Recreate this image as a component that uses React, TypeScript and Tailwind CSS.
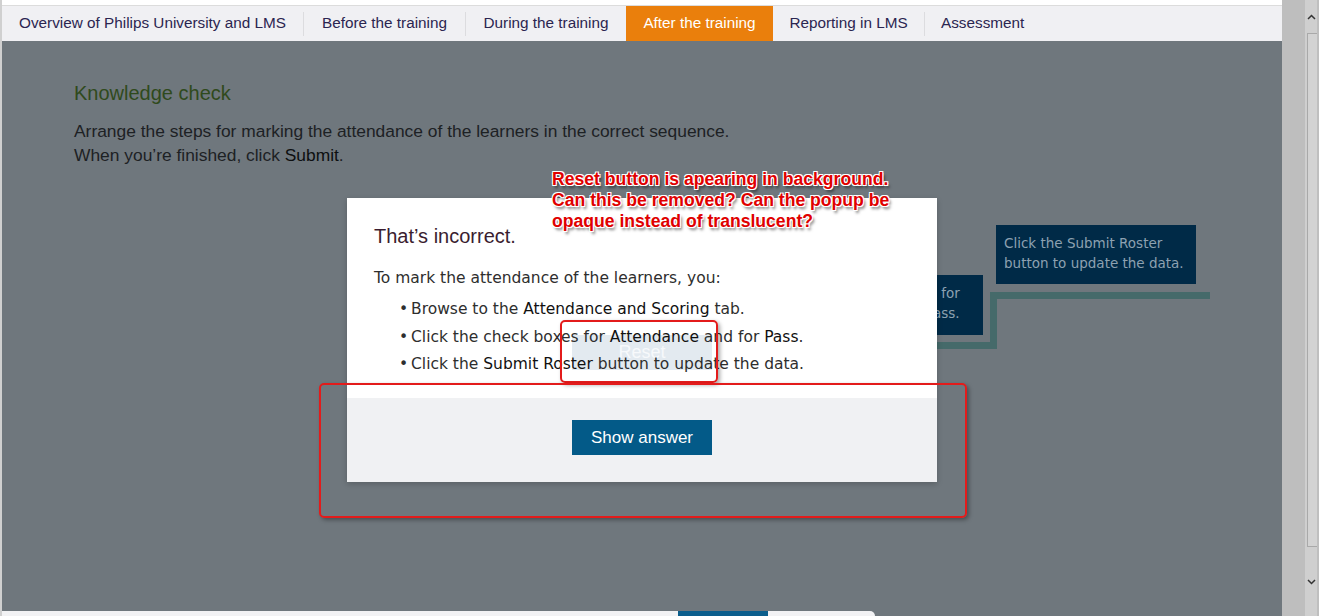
import React from "react";

const navItems = [
  { label: "Overview of Philips University and LMS", w: "w-[301px]" },
  { label: "Before the training", w: "w-[161px]" },
  { label: "During the training", w: "w-[160px]" },
  { label: "After the training", w: "w-[147px]", active: true },
  { label: "Reporting in LMS", w: "w-[151px]" },
];

const dv = { fontFamily: '"DejaVu Sans", Verdana, sans-serif' };

export default function App() {
  return (
    <div
      className="relative w-[1319px] h-[616px] flex overflow-hidden bg-[#bfbfbf]"
      style={{ fontFamily: '"Liberation Sans", Arial, sans-serif' }}
    >
      {/* main frame */}
      <div className="w-[1282px] h-full flex flex-col border-l-2 border-[#d0d0d0]">
        <div className="h-[5px] bg-white" />
        <div className="h-[1px] bg-[#dcdcdc]" />
        <nav className="h-[35px] flex bg-[#f0f0f3]">
          {navItems.map((it, i) => (
            <div key={i} className="flex items-center">
              {i > 0 && !it.active && !navItems[i - 1].active && (
                <div className="w-px h-[24px] bg-[#dcdcdf]" />
              )}
              <div
                className={`${it.w} h-[35px] flex items-center justify-center text-[15.3px] ${
                  it.active ? "bg-[#ea7f0c] text-white" : "text-[#2b2550]"
                }`}
              >
                {it.label}
              </div>
            </div>
          ))}
          <div className="flex items-center">
            <div className="w-px h-[24px] bg-[#dcdcdf]" />
            <div className="pl-[16px] text-[15.3px] text-[#2b2550]">Assessment</div>
          </div>
        </nav>

        {/* content */}
        <div className="relative flex-1 flex flex-col bg-[#6f777d]">
          <div className="flex-1 pl-[72px] pt-[40px]">
            <h2 className="text-[20px] leading-[24px] text-[#2f4a1c]">Knowledge check</h2>
            <p className="mt-[14px] text-[17.4px] leading-[24px] text-[#1d2124]">
              Arrange the steps for marking the attendance of the learners in the correct sequence.
              <br />
              When you’re finished, click <span className="text-[#0d0f10]">Submit</span>.
            </p>
          </div>

          {/* bottom toolbar edge */}
          <div className="h-[5px] flex">
            <div className="relative w-[873px] h-[5px] bg-[#f2f2f4] rounded-tr-[10px]">
              <div className="absolute left-[676px] top-0 w-[90px] h-[5px] bg-[#0b5e8c]" />
            </div>
          </div>

          {/* draggable step boxes (free canvas) */}
          <div
            className="absolute left-[781px] top-[234px] w-[200px] h-[60px] bg-[#002a47] px-[8px] py-[8px] text-[13.5px] leading-[20px] text-[#8da1b1] whitespace-nowrap overflow-hidden"
            style={dv}
          >
            Click the check boxes for
            <br />
            Attendance and for Pass.
          </div>
          <div
            className="absolute left-[994px] top-[184px] w-[200px] h-[59px] bg-[#002a47] px-[8px] py-[8px] text-[13.5px] leading-[20px] text-[#8da1b1]"
            style={dv}
          >
            Click the Submit Roster
            <br />
            button to update the data.
          </div>
          <div className="absolute left-[988px] top-[251px] w-[220px] h-[7px] bg-[#456a6a]" />
          <div className="absolute left-[988px] top-[251px] w-[7px] h-[56px] bg-[#456a6a]" />
          <div className="absolute left-[935px] top-[301px] w-[60px] h-[7px] bg-[#456a6a]" />

          {/* popup */}
          <div className="absolute left-[345px] top-[157px] w-[590px] h-[284px] flex flex-col shadow-[0_2px_6px_rgba(0,0,0,0.2)]">
            <div className="relative h-[200px] bg-white px-[27px] pt-[26px]">
              <div className="absolute left-[225px] top-[137px] w-[140px] h-[35px] bg-[#e3eaf0] flex items-center justify-center text-[18px] text-[#f7f9fb]">
                Reset
              </div>
              <div className="relative">
                <div className="text-[20px] leading-[24px] text-[#3a1d2f]">That’s incorrect.</div>
                <div className="mt-[18px] text-[15.5px] leading-[24px] text-[#2e2e2e]" style={dv}>
                  To mark the attendance of the learners, you:
                </div>
                <ul className="mt-[6px] text-[15.5px] leading-[27.5px] text-[#2e2e2e]" style={dv}>
                  <li className="flex">
                    <span className="w-[37px] pl-[25px]">•</span>
                    <span>
                      Browse to the <span className="text-[#111]">Attendance and Scoring</span> tab.
                    </span>
                  </li>
                  <li className="flex">
                    <span className="w-[37px] pl-[25px]">•</span>
                    <span>
                      Click the check boxes for <span className="text-[#111]">Attendance</span> and for{" "}
                      <span className="text-[#111]">Pass</span>.
                    </span>
                  </li>
                  <li className="flex">
                    <span className="w-[37px] pl-[25px]">•</span>
                    <span>
                      Click the <span className="text-[#111]">Submit Roster</span> button to update the data.
                    </span>
                  </li>
                </ul>
              </div>
            </div>
            <div className="flex-1 bg-[#f0f1f3] flex justify-center pt-[22px]">
              <button className="w-[140px] h-[35px] bg-[#035a88] text-white text-[17px]">
                Show answer
              </button>
            </div>
          </div>
        </div>
      </div>

      {/* right gray strip */}
      <div className="w-[23px] h-full bg-[#bebebe]" />

      {/* scrollbar */}
      <div className="w-[12px] h-full bg-[#cfcfcf] flex flex-col">
        <div className="h-[33px] flex items-center justify-center">
          <svg width="9" height="6" viewBox="0 0 9 6">
            <path d="M1 5 L4.5 1.5 L8 5" stroke="#333" strokeWidth="1.5" fill="none" />
          </svg>
        </div>
        <div className="flex-1 ml-[2px] border-l border-t border-b border-[#a9a9a9] bg-[#d3d3d3]" />
        <div className="h-[69px] flex items-center justify-center">
          <svg width="9" height="6" viewBox="0 0 9 6">
            <path d="M1 1 L4.5 4.5 L8 1" stroke="#333" strokeWidth="1.5" fill="none" />
          </svg>
        </div>
      </div>

      {/* annotations */}
      <div className="absolute left-[552px] top-[169px] text-[17.6px] leading-[21px] font-bold text-[#e00000] whitespace-nowrap [text-shadow:1px_1px_0_#fff,-1px_-1px_0_#fff,1px_-1px_0_#fff,-1px_1px_0_#fff,2px_3px_3px_rgba(0,0,0,0.55)]">
        Reset button is apearing in background.
        <br />
        Can this be removed? Can the popup be
        <br />
        opaque instead of translucent?
      </div>
      <div className="absolute left-[560px] top-[320px] w-[158px] h-[63px] border-2 border-[#e31b1b] rounded-[5px] shadow-[2px_2px_4px_rgba(0,0,0,0.35)]" />
      <div className="absolute left-[319px] top-[383px] w-[648px] h-[135px] border-2 border-[#e31b1b] rounded-[5px] shadow-[2px_2px_4px_rgba(0,0,0,0.35)]" />
    </div>
  );
}
